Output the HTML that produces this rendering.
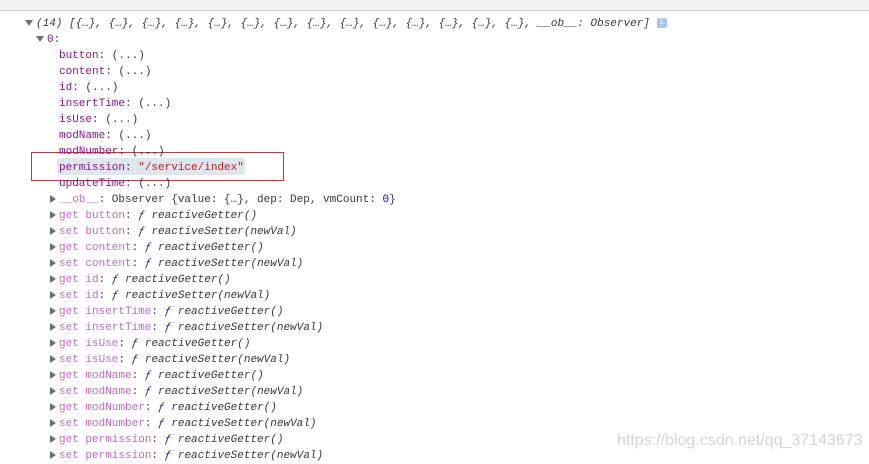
<!DOCTYPE html><html><head><style>
body{margin:0;width:869px;height:461px;overflow:hidden;background:#fff;position:relative;font-family:"Liberation Mono",monospace;font-size:11px;}
.top{position:absolute;left:0;top:0;width:869px;height:10px;background:#f2f2f2;border-bottom:1px solid #d0d0d0;}
.r{position:absolute;height:16px;line-height:16px;white-space:pre;color:#303942;margin-top:2px}
.k{color:#881391}.kd{color:#bb6ac4}.s{color:#c41a16}.n{color:#1c00cf}.f{color:#0d22aa;font-style:italic}.i{font-style:italic}
.tri{display:inline-block;width:0;height:0;margin-right:3px;vertical-align:middle}
.td{border-left:4px solid transparent;border-right:4px solid transparent;border-top:6px solid #6e6e6e}
.tr{border-top:4px solid transparent;border-bottom:4px solid transparent;border-left:6px solid #6e6e6e}
.box{position:absolute;left:31px;top:152px;width:251px;height:27px;border:1px solid #e8262b}
.hl{position:absolute;left:57px;top:158px;width:188px;height:17px;background:#dfe6ee;border-radius:3px}
.wm{position:absolute;left:617px;top:432px;font-family:"Liberation Sans",sans-serif;font-size:16px;color:#d4d4d4}
</style></head><body>
<div class="top"></div>
<div class="hl"></div>
<div class="box"></div>
<div class="r i" style="left:25px;top:14px"><span class="tri td"></span>(14) [{…}, {…}, {…}, {…}, {…}, {…}, {…}, {…}, {…}, {…}, {…}, {…}, {…}, {…}, __ob__: Observer] <span style="display:inline-block;width:10px;height:10px;background:#a8c4ee;border-radius:2px;color:#fff;font-size:8px;line-height:10px;text-align:center;font-style:normal;vertical-align:middle">i</span></div>
<div class="r" style="left:36px;top:30px"><span class="tri td"></span><span class="k">0</span>:</div>
<div class="r" style="left:59px;top:46px"><span class="k">button</span>: (...)</div>
<div class="r" style="left:59px;top:62px"><span class="k">content</span>: (...)</div>
<div class="r" style="left:59px;top:78px"><span class="k">id</span>: (...)</div>
<div class="r" style="left:59px;top:94px"><span class="k">insertTime</span>: (...)</div>
<div class="r" style="left:59px;top:110px"><span class="k">isUse</span>: (...)</div>
<div class="r" style="left:59px;top:126px"><span class="k">modName</span>: (...)</div>
<div class="r" style="left:59px;top:142px"><span class="k">modNumber</span>: (...)</div>
<div class="r" style="left:59px;top:158px"><span class="k">permission</span>: <span class="s">"/service/index"</span></div>
<div class="r" style="left:59px;top:174px"><span class="k">updateTime</span>: (...)</div>
<div class="r" style="left:50px;top:190px"><span class="tri tr"></span><span class="kd">__ob__</span>: Observer {value: {…}, dep: Dep, vmCount: <span class="n">0</span>}</div>
<div class="r" style="left:50px;top:206px"><span class="tri tr"></span><span class="kd">get button</span>: <span class="f">ƒ</span> <span class="i">reactiveGetter()</span></div>
<div class="r" style="left:50px;top:222px"><span class="tri tr"></span><span class="kd">set button</span>: <span class="f">ƒ</span> <span class="i">reactiveSetter(newVal)</span></div>
<div class="r" style="left:50px;top:238px"><span class="tri tr"></span><span class="kd">get content</span>: <span class="f">ƒ</span> <span class="i">reactiveGetter()</span></div>
<div class="r" style="left:50px;top:254px"><span class="tri tr"></span><span class="kd">set content</span>: <span class="f">ƒ</span> <span class="i">reactiveSetter(newVal)</span></div>
<div class="r" style="left:50px;top:270px"><span class="tri tr"></span><span class="kd">get id</span>: <span class="f">ƒ</span> <span class="i">reactiveGetter()</span></div>
<div class="r" style="left:50px;top:286px"><span class="tri tr"></span><span class="kd">set id</span>: <span class="f">ƒ</span> <span class="i">reactiveSetter(newVal)</span></div>
<div class="r" style="left:50px;top:302px"><span class="tri tr"></span><span class="kd">get insertTime</span>: <span class="f">ƒ</span> <span class="i">reactiveGetter()</span></div>
<div class="r" style="left:50px;top:318px"><span class="tri tr"></span><span class="kd">set insertTime</span>: <span class="f">ƒ</span> <span class="i">reactiveSetter(newVal)</span></div>
<div class="r" style="left:50px;top:334px"><span class="tri tr"></span><span class="kd">get isUse</span>: <span class="f">ƒ</span> <span class="i">reactiveGetter()</span></div>
<div class="r" style="left:50px;top:350px"><span class="tri tr"></span><span class="kd">set isUse</span>: <span class="f">ƒ</span> <span class="i">reactiveSetter(newVal)</span></div>
<div class="r" style="left:50px;top:366px"><span class="tri tr"></span><span class="kd">get modName</span>: <span class="f">ƒ</span> <span class="i">reactiveGetter()</span></div>
<div class="r" style="left:50px;top:382px"><span class="tri tr"></span><span class="kd">set modName</span>: <span class="f">ƒ</span> <span class="i">reactiveSetter(newVal)</span></div>
<div class="r" style="left:50px;top:398px"><span class="tri tr"></span><span class="kd">get modNumber</span>: <span class="f">ƒ</span> <span class="i">reactiveGetter()</span></div>
<div class="r" style="left:50px;top:414px"><span class="tri tr"></span><span class="kd">set modNumber</span>: <span class="f">ƒ</span> <span class="i">reactiveSetter(newVal)</span></div>
<div class="r" style="left:50px;top:430px"><span class="tri tr"></span><span class="kd">get permission</span>: <span class="f">ƒ</span> <span class="i">reactiveGetter()</span></div>
<div class="r" style="left:50px;top:446px"><span class="tri tr"></span><span class="kd">set permission</span>: <span class="f">ƒ</span> <span class="i">reactiveSetter(newVal)</span></div>
<div class="wm">https://blog.csdn.net/qq_37143673</div>
</body></html>
